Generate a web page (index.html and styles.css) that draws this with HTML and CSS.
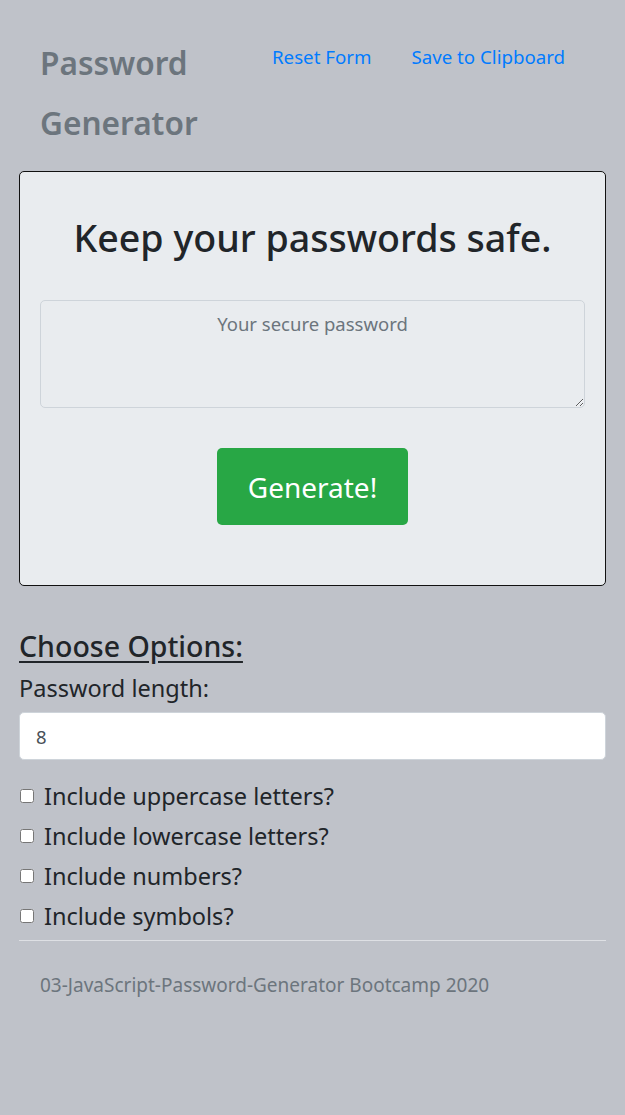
FILE: index.html
```html
<!DOCTYPE html>
<html lang="en">
<head>
<meta charset="utf-8">
<title>Password Generator</title>
<link rel="stylesheet" href="styles.css">
</head>
<body>
<header class="topbar">
  <div class="brand">Password Generator</div>
  <nav class="links">
    <a class="link" href="#">Reset Form</a>
    <a class="link" href="#">Save to Clipboard</a>
  </nav>
</header>
<main>
  <section class="card">
    <h1 class="card-title">Keep your passwords safe.</h1>
    <textarea class="pw-box" rows="3" placeholder="Your secure password"></textarea>
    <div class="btn-row"><button class="btn-generate" type="button">Generate!</button></div>
  </section>
  <section class="options">
    <h3 class="options-title">Choose Options:</h3>
    <label class="len-label" for="len">Password length:</label>
    <input class="len-input" id="len" type="text" value="8">
    <label class="check"><input type="checkbox"> Include uppercase letters?</label>
    <label class="check"><input type="checkbox"> Include lowercase letters?</label>
    <label class="check"><input type="checkbox"> Include numbers?</label>
    <label class="check"><input type="checkbox"> Include symbols?</label>
    <hr class="rule">
  </section>
  <footer class="foot">03-JavaScript-Password-Generator Bootcamp 2020</footer>
</main>
</body>
</html>
```
FILE: styles.css
```css
* { box-sizing: border-box; }
html, body { margin: 0; padding: 0; }
body {
  background: #bfc2c9;
  font-family: "Noto Sans", "Open Sans", sans-serif;
  color: #212529;
}
.topbar {
  display: flex;
  align-items: flex-start;
  padding: 33px 20px 0 40px;
}
.brand {
  width: 212px;
  font-size: 31.6px;
  font-weight: 600;
  line-height: 60px;
  color: #6c757d;
}
.links { display: flex; }
.link {
  display: block;
  padding: 0 20px;
  line-height: 47px;
  font-size: 18.7px;
  color: #007bff;
  text-decoration: none;
}
.card {
  margin: 18px 19px 0;
  background: #e9ecef;
  border: 1px solid #111;
  border-radius: 5px;
  padding: 42px 20px 60px;
}
.card-title {
  margin: 0 0 38px;
  text-align: center;
  font-size: 37.6px;
  font-weight: 500;
  line-height: 48px;
}
.pw-box {
  display: block;
  width: 100%;
  height: 108px;
  padding: 8px 16px;
  font-family: inherit;
  font-size: 18.5px;
  line-height: 30px;
  text-align: center;
  background: #e9ecef;
  border: 1px solid #ced4da;
  border-radius: 5px;
  color: #495057;
}
.pw-box::placeholder { color: #6c757d; }
.btn-row { display: flex; justify-content: center; margin-top: 40px; }
.btn-generate {
  width: 191px;
  height: 77px;
  background: #28a745;
  border: 0;
  border-radius: 5px;
  color: #fff;
  font-family: inherit;
  font-size: 28px;
}
.options { padding: 0 19px; margin-top: 40px; display: flex; flex-direction: column; }
.options-title {
  margin: 0;
  font-size: 28.5px;
  font-weight: 500;
  line-height: 40px;
  text-decoration: underline;
  text-underline-offset: 4px;
}
.len-label { font-size: 23.5px; line-height: 34px; margin: 5px 0 7px; }
.len-input {
  display: block;
  width: 100%;
  height: 48px;
  padding: 8px 16px;
  font-family: inherit;
  font-size: 18.5px;
  background: #fff;
  border: 1px solid #ced4da;
  border-radius: 5px;
  color: #495057;
  margin-bottom: 16px;
}
.check {
  display: flex;
  align-items: center;
  font-size: 23.5px;
  line-height: 40px;
}
.check input { margin: 0 10px 0 1px; width: 14px; height: 14px; }
.rule { width: 100%; margin: 4px 0 0; border: 0; border-top: 1px solid #dee0e4; }
.foot {
  padding: 31px 40px;
  font-size: 19px;
  line-height: 26px;
  color: #6c757d;
}
```
